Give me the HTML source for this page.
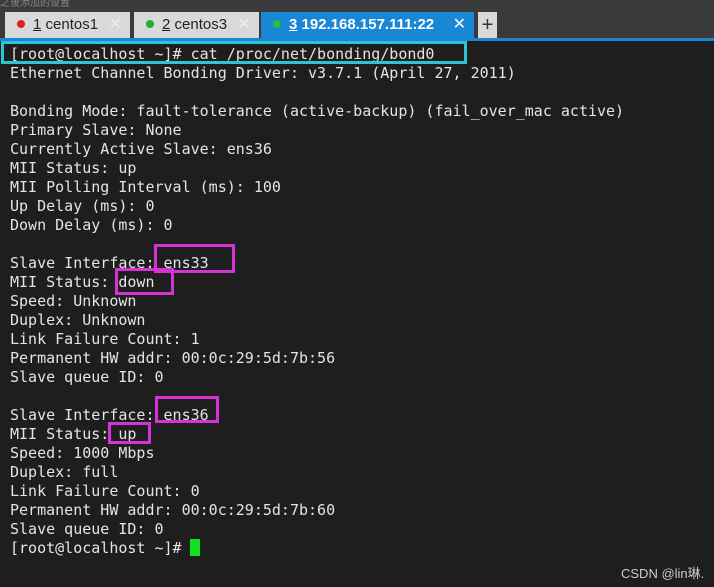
<!DOCTYPE html>
<html><head><meta charset="utf-8"><style>
body{margin:0;width:714px;height:587px;background:#1e1e1e;position:relative;overflow:hidden;font-family:"Liberation Sans","Noto Sans CJK SC",sans-serif}
.top{position:absolute;left:0;top:0;width:714px;height:38px;background:#3a3a3a}
.tab{position:absolute;top:12px;height:26px;background:#d9d9d9;color:#222;font-size:15px;line-height:26px;box-sizing:border-box;padding-left:12px}
.tab .d{display:inline-block;width:8px;height:8px;border-radius:50%;margin-right:8px;vertical-align:1px}
.tab .x{position:absolute;right:8px;top:0;color:#eee;font-size:16px}
.term{position:absolute;left:10px;top:45px;font-family:"DejaVu Sans Mono","Liberation Mono",monospace;font-size:15px;line-height:19px;color:#e4e4e4;white-space:pre;margin:0}
.b{position:absolute;box-sizing:border-box;border:3px solid #d633d6}
</style></head><body>
<div class="top"></div>
<div style="position:absolute;left:0;top:0;color:#888;font-size:10px;line-height:8px">之後添加的设置</div>
<div class="tab" style="left:5px;width:125px"><span class="d" style="background:#e02020"></span><u>1</u> centos1<span class="x">✕</span></div>
<div class="tab" style="left:134px;width:125px"><span class="d" style="background:#20b030"></span><u>2</u> centos3<span class="x">✕</span></div>
<div class="tab" style="left:261px;width:213px;background:#1a86d6;color:#fff;font-weight:bold"><span class="d" style="background:#20c040"></span><u>3</u> 192.168.157.111:22<span class="x" style="font-weight:normal;color:#fff">✕</span></div>
<div class="tab" style="left:478px;width:19px;padding:0;text-align:center;font-size:20px;color:#333">+</div>
<div style="position:absolute;left:0;top:38px;width:714px;height:3px;background:#1a86d6"></div>
<pre class="term">[root@localhost ~]# cat /proc/net/bonding/bond0
Ethernet Channel Bonding Driver: v3.7.1 (April 27, 2011)

Bonding Mode: fault-tolerance (active-backup) (fail_over_mac active)
Primary Slave: None
Currently Active Slave: ens36
MII Status: up
MII Polling Interval (ms): 100
Up Delay (ms): 0
Down Delay (ms): 0

Slave Interface: ens33
MII Status: down
Speed: Unknown
Duplex: Unknown
Link Failure Count: 1
Permanent HW addr: 00:0c:29:5d:7b:56
Slave queue ID: 0

Slave Interface: ens36
MII Status: up
Speed: 1000 Mbps
Duplex: full
Link Failure Count: 0
Permanent HW addr: 00:0c:29:5d:7b:60
Slave queue ID: 0
[root@localhost ~]# </pre>
<div style="position:absolute;left:190px;top:539px;width:10px;height:17px;background:#10e020"></div>
<div class="b" style="left:1px;top:41px;width:466px;height:23px;border-color:#2ec4d4"></div>
<div class="b" style="left:154px;top:244px;width:81px;height:29px"></div>
<div class="b" style="left:115px;top:268px;width:59px;height:27px"></div>
<div class="b" style="left:155px;top:396px;width:64px;height:27px"></div>
<div class="b" style="left:108px;top:422px;width:43px;height:22px"></div>
<div style="position:absolute;left:621px;top:563px;color:#ccc;font-size:13px">CSDN @lin琳.</div>
</body></html>
